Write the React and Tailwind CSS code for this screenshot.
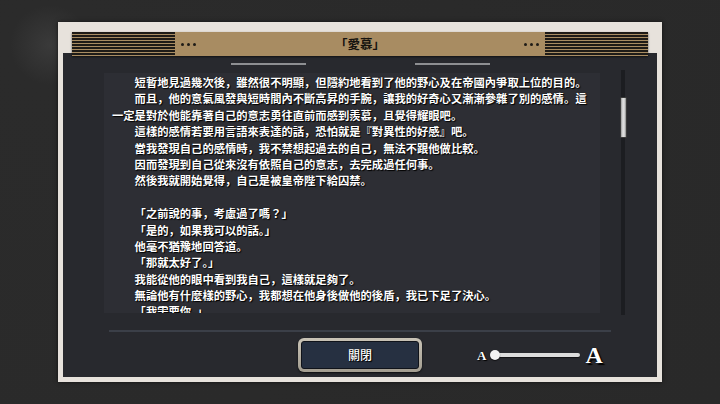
import React from "react";

const cjk = "font-['Noto_Sans_CJK_JP','Noto_Sans_CJK_TC',sans-serif]";
const serif = "font-['Liberation_Serif','DejaVu_Serif',serif]";
const shadow = "[text-shadow:1px_1px_1px_#000,0_0_1px_#000]";

// each entry is one visual line of the story text: [indent, text]
const lines = [
  [true, "短暫地見過幾次後，雖然很不明顯，但隱約地看到了他的野心及在帝國內爭取上位的目的。"],
  [true, "而且，他的意氣風發與短時間內不斷高昇的手腕，讓我的好奇心又漸漸參雜了別的感情。這"],
  [false, "一定是對於他能靠著自己的意志勇往直前而感到羨慕，且覺得耀眼吧。"],
  [true, "這樣的感情若要用言語來表達的話，恐怕就是『對異性的好感』吧。"],
  [true, "當我發現自己的感情時，我不禁想起過去的自己，無法不跟他做比較。"],
  [true, "因而發現到自己從來沒有依照自己的意志，去完成過任何事。"],
  [true, "然後我就開始覺得，自己是被皇帝陛下給囚禁。"],
  [true, ""],
  [true, "「之前說的事，考慮過了嗎？」"],
  [true, "「是的，如果我可以的話。」"],
  [true, "他毫不猶豫地回答道。"],
  [true, "「那就太好了。」"],
  [true, "我能從他的眼中看到我自己，這樣就足夠了。"],
  [true, "無論他有什麼樣的野心，我都想在他身後做他的後盾，我已下足了決心。"],
  [true, "「我需要你。」"],
];

const Stripes = () => (
  <div className="w-[103px] h-full bg-[repeating-linear-gradient(180deg,#1e1b17_0px,#1e1b17_2px,#a88c62_2px,#a88c62_3px)]" />
);

const Dots = () => (
  <div className="flex gap-[3px] mx-[6px]">
    <span className="w-[3px] h-[3px] rounded-full bg-[#1e1b17]" />
    <span className="w-[3px] h-[3px] rounded-full bg-[#1e1b17]" />
    <span className="w-[3px] h-[3px] rounded-full bg-[#1e1b17]" />
  </div>
);

export default function App() {
  return (
    <div className="w-[720px] h-[404px] overflow-hidden bg-[#2a2a2a] bg-[radial-gradient(circle_at_50px_45px,#3a3a3a_0px,#2b2b2b_40px,#292929_100%)] pt-[22px]">
      <div className="mx-auto w-[604px] bg-[#e7e2dc] px-[5px] pt-[10px] pb-[5px] shadow-[0_0_4px_rgba(0,0,0,0.6)]">
        {/* header */}
        <div className="relative z-10 mx-[9px] -mb-[3px] h-[24px] flex items-center bg-[#a88c62] shadow-[0_1px_2px_rgba(0,0,0,0.6)]">
          <Stripes />
          <Dots />
          <div className={`flex-1 text-center text-[12.5px] text-[#15130f] ${cjk} font-bold`}>「愛慕」</div>
          <Dots />
          <Stripes />
        </div>

        {/* dark panel */}
        <div className="h-[324px] bg-[#28292e] pt-[10px]">
          <div className="flex justify-center gap-[109px]">
            <div className="w-[75px] h-[2px] bg-[#8e8f92]" />
            <div className="w-[75px] h-[2px] bg-[#8e8f92]" />
          </div>

          <div className="flex items-start mt-[5px]">
            <div className={`ml-[41px] mt-[3px] w-[496px] h-[240px] overflow-hidden bg-[#2d2e34] pl-[8px] pt-[1px] text-[11.3px] leading-[16.4px] text-white ${cjk} font-bold ${shadow}`}>
              {lines.map(([indent, t], i) => (
                <div key={i} className={`whitespace-nowrap h-[16.4px] ${indent ? "pl-[22.6px]" : ""}`}>{t}</div>
              ))}
            </div>
            <div className="relative ml-[19px] w-[8px] h-[245px]">
              <div className="mx-auto w-[4px] h-full bg-[#1c1d21]" />
              <div className="absolute left-[1px] top-[27px] w-[7px] h-[41px] rounded-[1px] border border-[#3a3a3a] bg-[linear-gradient(90deg,#9a9a9a,#e4e4e4_40%,#d0d0d0_70%,#8a8a8a)]" />
            </div>
          </div>

          <div className="ml-[46px] mt-[15px] w-[502px] h-[2px] bg-[#3b3f48]" />

          <div className="mt-[6px] grid grid-cols-[1fr_auto_1fr] items-center">
            <div />
            <div className="w-[124px] h-[34px] rounded-[6px] p-[3px] bg-[linear-gradient(180deg,#c9c3b6,#a39d90)] shadow-[0_1px_2px_rgba(0,0,0,0.7)]">
              <div className={`h-full rounded-[3px] border border-[#10131a] bg-[#263041] flex items-center justify-center text-[12px] text-white ${cjk} font-medium ${shadow}`}>
                關閉
              </div>
            </div>
            <div className="flex items-center ml-[55px]">
              <span className={`${serif} font-bold text-[13px] leading-none text-white ${shadow}`}>A</span>
              <div className="ml-[4px] flex items-center">
                <span className="relative z-10 w-[10px] h-[10px] rounded-full bg-[#f2f2f2] shadow-[0_1px_1px_rgba(0,0,0,0.6)]" />
                <span className="-ml-[4px] w-[84px] h-[4px] rounded-full bg-[#dcdcdc] shadow-[0_1px_1px_rgba(0,0,0,0.6)]" />
              </div>
              <span className={`ml-[5px] ${serif} font-bold text-[24px] leading-none text-white [text-shadow:2px_2px_1px_#000,0_0_1px_#000]`}>A</span>
            </div>
          </div>
        </div>
      </div>
    </div>
  );
}
